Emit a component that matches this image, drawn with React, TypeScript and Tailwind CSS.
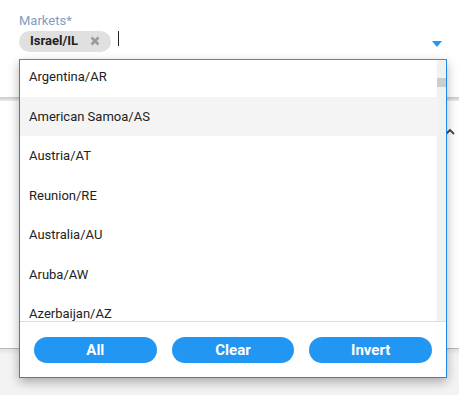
import React from "react";

const countries = [
  "Argentina/AR",
  "American Samoa/AS",
  "Austria/AT",
  "Reunion/RE",
  "Australia/AU",
  "Aruba/AW",
  "Azerbaijan/AZ",
];

const MarketsSelect = () => {
  return (
    <div className="relative w-[459px] h-[395px] overflow-hidden bg-[#f3f3f3] font-['Roboto',sans-serif]">
      {/* form header */}
      <div className="h-[97px] bg-white px-[19px] pt-[13px]">
        <div className="text-[13px] leading-[16px] text-[#7d9ec2]">Markets*</div>
        <div className="flex items-center h-[22px] mt-[1px]">
          <div className="flex items-center h-[21px] w-[92px] rounded-full bg-[#e0e0e0] pl-[11px]">
            <span className="text-[13px] font-bold text-[#222]">Israel/IL</span>
            <svg width="10" height="10" viewBox="0 0 10 10" className="ml-[12px]">
              <path d="M1.5 1.5 L8.5 8.5 M8.5 1.5 L1.5 8.5" stroke="#9a9a9a" strokeWidth="2.6" />
            </svg>
          </div>
          <div className="ml-[7px] w-px h-[15px] bg-[#222] -mt-[6px]" />
          <div className="flex-1" />
          <svg width="10" height="6" viewBox="0 0 10 6" className="-mr-[2px] mt-[6px]">
            <path d="M0 0 H10 L5 6 Z" fill="#2196f3" />
          </svg>
        </div>
      </div>

      {/* card behind */}
      <div className="h-[4px] bg-gradient-to-b from-[#c9c9c9] to-[#ececec]" />
      <div className="h-[248px] bg-white border-b border-[#b8b8b8] flex justify-end pt-[27px] pr-[4px]">
        <svg width="10" height="7" viewBox="0 0 10 7">
          <path d="M1 6 L5 2 L9 6" stroke="#444" strokeWidth="1.8" fill="none" />
        </svg>
      </div>
      <div className="h-[6px] bg-gradient-to-b from-[#e2e2e2] to-[#f3f3f3]" />

      {/* dropdown */}
      <div className="absolute left-[19px] top-[59px] w-[428px] h-[319px] bg-white border border-[#1e88e5] border-t-[#6f8496] shadow-[0_4px_10px_rgba(0,0,0,0.3)] flex flex-col">
        <div className="flex h-[262px] border-b border-[#dddddd]">
          <div className="flex-1 overflow-hidden">
            <div className="-mt-[3px]">
              {countries.map((c, i) => (
                <div
                  key={c}
                  className={
                    "h-[39.5px] flex items-center px-[9px] text-[13px] text-[#222] " +
                    (i === 1 ? "bg-[#f4f4f4]" : "bg-white")
                  }
                >
                  {c}
                </div>
              ))}
            </div>
          </div>
          <div className="w-[9px] bg-[#f1f1f1] pt-[18px]">
            <div className="h-[9px] bg-[#cdcdcd]" />
          </div>
        </div>
        <div className="flex-1 flex items-center gap-[15px] px-[14px]">
          {["All", "Clear", "Invert"].map((b) => (
            <button
              key={b}
              className="h-[26px] flex-1 rounded-full bg-[#2196f3] text-white text-[15px] leading-[26px] font-bold"
            >
              {b}
            </button>
          ))}
        </div>
      </div>
    </div>
  );
};

export default function App() {
  return <MarketsSelect />;
}
